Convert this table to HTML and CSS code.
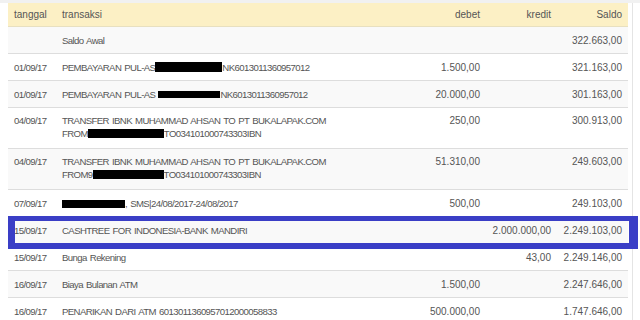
FILE: index.html
```html
<!DOCTYPE html>
<html>
<head>
<meta charset="utf-8">
<link rel="stylesheet" href="styles.css">
</head>
<body>
<div class="topstrip"></div>
<div class="wrap">
<table class="mutasi">
  <colgroup>
    <col class="c-date">
    <col class="c-desc">
    <col class="c-amt">
    <col class="c-kr">
    <col class="c-sal">
  </colgroup>
  <thead>
    <tr><th>tanggal</th><th>transaksi</th><th class="num">debet</th><th class="num">kredit</th><th class="num">Saldo</th></tr>
  </thead>
  <tbody>
    <tr class="odd"><td></td><td class="txt">Saldo Awal</td><td></td><td></td><td class="num">322.663,00</td></tr>
    <tr><td class="txt">01/09/17</td><td class="txt">PEMBAYARAN PUL-AS<span class="red r1"></span>NK6013011360957012</td><td class="num">1.500,00</td><td></td><td class="num">321.163,00</td></tr>
    <tr class="odd"><td class="txt">01/09/17</td><td class="txt">PEMBAYARAN PUL-AS <span class="red r2"></span>NK6013011360957012</td><td class="num">20.000,00</td><td></td><td class="num">301.163,00</td></tr>
    <tr class="two"><td class="txt">04/09/17</td><td class="txt">TRANSFER IBNK MUHAMMAD AHSAN TO PT BUKALAPAK.COM<br>FROM<span class="red r3"></span>TO034101000743303IBN</td><td class="num">250,00</td><td></td><td class="num">300.913,00</td></tr>
    <tr class="odd two"><td class="txt">04/09/17</td><td class="txt">TRANSFER IBNK MUHAMMAD AHSAN TO PT BUKALAPAK.COM<br>FROM9<span class="red r4"></span>TO034101000743303IBN</td><td class="num">51.310,00</td><td></td><td class="num">249.603,00</td></tr>
    <tr><td class="txt">07/09/17</td><td class="txt"><span class="red r5"></span>, SMS|24/08/2017-24/08/2017</td><td class="num">500,00</td><td></td><td class="num">249.103,00</td></tr>
    <tr class="odd hl"><td class="txt">15/09/17</td><td class="txt">CASHTREE FOR INDONESIA-BANK MANDIRI</td><td></td><td class="num">2.000.000,00</td><td class="num">2.249.103,00</td></tr>
    <tr><td class="txt">15/09/17</td><td class="txt">Bunga Rekening</td><td></td><td class="num">43,00</td><td class="num">2.249.146,00</td></tr>
    <tr class="odd"><td class="txt">16/09/17</td><td class="txt">Biaya Bulanan ATM</td><td class="num">1.500,00</td><td></td><td class="num">2.247.646,00</td></tr>
    <tr><td class="txt">16/09/17</td><td class="txt">PENARIKAN DARI ATM 6013011360957012000058833</td><td class="num">500.000,00</td><td></td><td class="num">1.747.646,00</td></tr>
  </tbody>
</table>
<div class="mark"></div>
</div>
</body>
</html>
```
FILE: styles.css
```css
html, body {
  margin: 0;
  padding: 0;
  background: #ffffff;
  overflow: hidden;
}
body {
  font-family: "Liberation Sans", Arial, sans-serif;
  color: #555555;
  width: 640px;
  height: 320px;
}
.topstrip {
  height: 3px;
  background: #f1f1f1;
}
.wrap {
  position: relative;
  padding-left: 8px;
  width: 624px;
  border-right: 1px solid #e4e4e4;
}
.mutasi {
  width: 620px;
  border-collapse: collapse;
  table-layout: fixed;
  font-size: 10px;
}
.c-date { width: 48px; }
.c-desc { width: 344px; }
.c-amt { width: 86px; }
.c-kr { width: 71px; }
.c-sal { width: 71px; }
.mutasi th {
  background: #fcf0c5;
  font-weight: normal;
  text-align: left;
  height: 23px;
  padding: 0 6px;
  font-size: 10px;
  color: #555555;
  border-bottom: 1px solid #e8e0c0;
}
.mutasi td {
  padding: 7px 6px 6px;
  line-height: 13px;
  height: 13px;
  border-bottom: 1px solid #dddddd;
  white-space: nowrap;
  overflow: visible;
  vertical-align: top;
}
.mutasi td.txt {
  font-size: 9.6px;
  letter-spacing: -0.6px;
  word-spacing: 1px;
}
.mutasi tr.odd td { background: #f9f9f9; }
.mutasi tr.two td { padding-top: 6px; padding-bottom: 8px; }
.mutasi .num { text-align: right; }
.red {
  display: inline-block;
  background: #000;
  vertical-align: -1px;
}
.r1 { width: 67px; height: 10px; }
.r2 { width: 62px; height: 7px; vertical-align: 0; }
.r3 { width: 76px; height: 9px; }
.r4 { width: 71px; height: 9px; }
.r5 { width: 63px; height: 8px; }
.mark {
  position: absolute;
  left: 8px;
  top: 213px;
  width: 614px;
  height: 22px;
  border-style: solid;
  border-color: #3a3ec6;
  border-width: 5px 9px 6px 7px;
}
```
